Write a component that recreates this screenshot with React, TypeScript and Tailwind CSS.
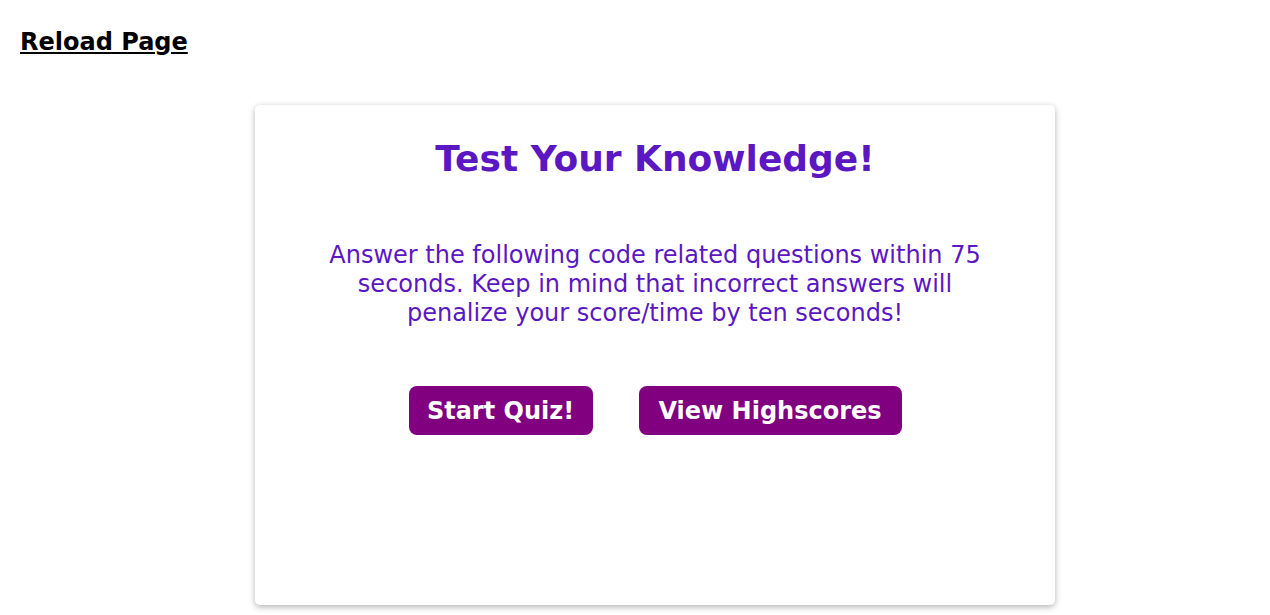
import React from "react";

export default function App() {
  return (
    <div className="min-h-[615px] bg-white font-['DejaVu_Sans',Verdana,sans-serif]">
      <div className="px-5 pt-[27px]">
        <a href="#" className="text-[24px] font-bold text-black underline leading-[30px]">
          Reload Page
        </a>
      </div>
      <div className="pl-[40px]">
        <div className="mx-auto mt-[48px] w-[800px] h-[500px] rounded-[5px] bg-white shadow-[0_2px_6px_rgba(0,0,0,0.3)] flex flex-col items-center">
          <h1 className="mt-[32px] text-[36px] font-bold text-[#5b17c2] leading-[44px]">
            Test Your Knowledge!
          </h1>
          <p className="mt-[60px] w-[680px] text-center text-[24px] leading-[29px] text-[#5b17c2]">
            Answer the following code related questions within 75 seconds. Keep in mind that incorrect answers will penalize your score/time by ten seconds!
          </p>
          <div className="mt-[58px] flex gap-[46px]">
            <button className="h-[49px] w-[184px] rounded-[8px] bg-[#800080] text-white text-[24px] font-bold">
              Start Quiz!
            </button>
            <button className="h-[49px] w-[263px] rounded-[8px] bg-[#800080] text-white text-[24px] font-bold">
              View Highscores
            </button>
          </div>
        </div>
      </div>
    </div>
  );
}
